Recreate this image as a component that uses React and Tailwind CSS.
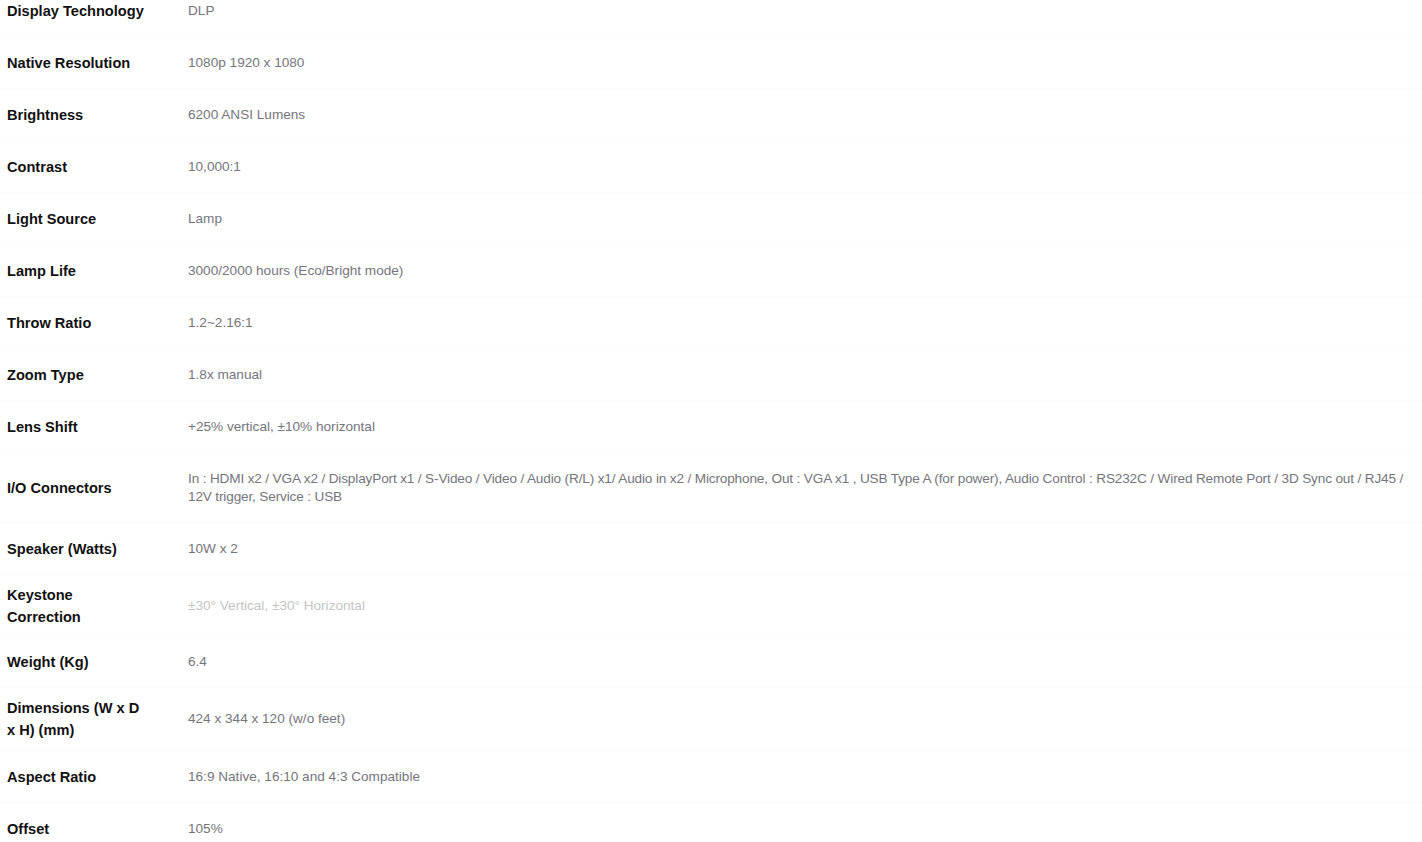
const SPECS = [
  { label: "Display Technology", value: "DLP", h: "h-[52px]" },
  { label: "Native Resolution", value: "1080p 1920 x 1080", h: "h-[52px]" },
  { label: "Brightness", value: "6200 ANSI Lumens", h: "h-[52px]" },
  { label: "Contrast", value: "10,000:1", h: "h-[52px]" },
  { label: "Light Source", value: "Lamp", h: "h-[52px]" },
  { label: "Lamp Life", value: "3000/2000 hours (Eco/Bright mode)", h: "h-[52px]" },
  { label: "Throw Ratio", value: "1.2~2.16:1", h: "h-[52px]" },
  { label: "Zoom Type", value: "1.8x manual", h: "h-[52px]" },
  { label: "Lens Shift", value: "+25% vertical, ±10% horizontal", h: "h-[52px]" },
  {
    label: "I/O Connectors",
    value:
      "In : HDMI x2 / VGA x2 / DisplayPort x1 / S-Video / Video / Audio (R/L) x1/ Audio in x2 / Microphone, Out : VGA x1 , USB Type A (for power), Audio Control : RS232C / Wired Remote Port / 3D Sync out / RJ45 / 12V trigger, Service : USB",
    h: "h-[70px]",
    tight: true,
  },
  { label: "Speaker (Watts)", value: "10W x 2", h: "h-[52px]" },
  { label: "Keystone Correction", value: "±30° Vertical, ±30° Horizontal", h: "h-[62px]", faint: true },
  { label: "Weight (Kg)", value: "6.4", h: "h-[51px]" },
  { label: "Dimensions (W x D x H) (mm)", value: "424 x 344 x 120 (w/o feet)", h: "h-[63px]" },
  { label: "Aspect Ratio", value: "16:9 Native, 16:10 and 4:3 Compatible", h: "h-[52px]" },
  { label: "Offset", value: "105%", h: "h-[52px]" },
];

export default function App() {
  return (
    <div className="w-[1422px] h-[842px] overflow-hidden bg-white font-['Liberation_Sans',Arial,sans-serif]">
      <div className="-mt-[15px]">
        {SPECS.map((row) => (
          <div key={row.label} className={`flex items-center border-b border-[#fbfbfb] ${row.h}`}>
            <div className="w-[175px] shrink-0 pl-[7px] pr-[26px] text-[14.6px] leading-[22px] font-bold text-[#111]">
              {row.label}
            </div>
            <div
              className={`pl-[13px] pr-[4px] text-[13.6px] leading-[18px] ${
                row.faint ? "text-[#c4c4c4]" : "text-[#75757c]"
              } ${row.tight ? "tracking-[-0.15px]" : ""}`}
            >
              {row.value}
            </div>
          </div>
        ))}
      </div>
    </div>
  );
}
